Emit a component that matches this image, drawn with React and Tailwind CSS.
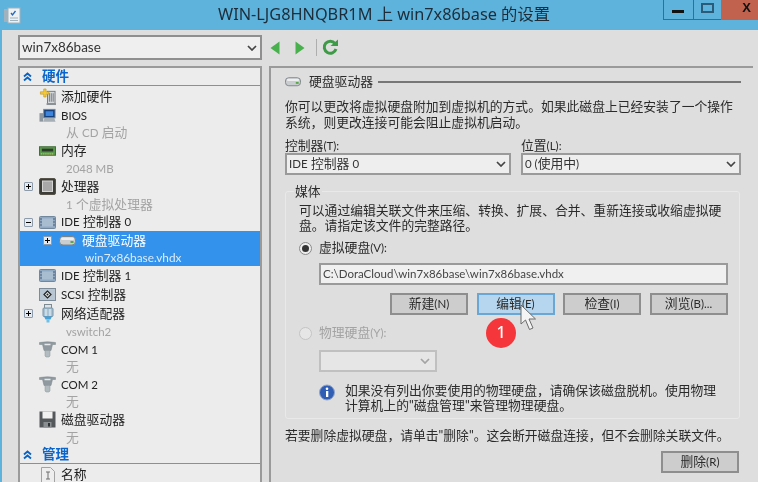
import React from "react";

function L({ children }) {
  return <span className="text-[11.500px]">{children}</span>;
}

function Chevrons() {
  return (
    <svg width="9" height="10" viewBox="0 0 9 10" className="shrink-0">
      <path d="M1 4.500 L4.500 1.500 L8 4.500 M1 8.500 L4.500 5.500 L8 8.500" fill="none" stroke="#0a62c4" strokeWidth="1.800" />
    </svg>
  );
}

function Expander({ minus }) {
  return (
    <div className="w-[9px] h-[9px] shrink-0 border border-[#8d9bab] bg-[#e6ebf1] rounded-[1px] flex items-center justify-center relative">
      <div className="w-[5px] h-px bg-black" />
      {!minus && <div className="absolute w-px h-[5px] bg-black" />}
    </div>
  );
}

function DiskIcon({ w = 17 }) {
  return (
    <svg width={w} height="11" viewBox="0 0 17 11" className="shrink-0">
      <rect x="0.500" y="1.500" width="16" height="8.500" rx="3.500" fill="#c9cdd0" stroke="#7d8488" />
      <rect x="2" y="2.500" width="13" height="2.500" rx="1.200" fill="#eceeef" />
      <rect x="11.500" y="6" width="3" height="2" fill="#5aa64a" />
    </svg>
  );
}

function AddIcon() {
  return (
    <svg width="18" height="18" viewBox="0 0 18 18">
      <rect x="9" y="3" width="8" height="13" fill="#d5d8da" stroke="#73787c" />
      <path d="M11 5v9M13 5v9M15 5v9" stroke="#73787c" />
      <rect x="8" y="15.500" width="10" height="2" fill="#8c9196" />
      <path d="M5 0.500h2.500v3h3v2.500h-3v3H5v-3H1.500V3.500H5z" fill="#f4c93b" stroke="#b98f18" strokeWidth="0.600" />
    </svg>
  );
}
function BiosIcon() {
  return (
    <svg width="18" height="15" viewBox="0 0 18 15">
      <rect x="0.500" y="5" width="4" height="9" fill="#8d979f" />
      <rect x="5" y="1" width="12" height="9" fill="#15407e" stroke="#7c8790" />
      <rect x="7" y="3" width="8" height="5" fill="#3e86dd" />
      <path d="M6 10h10l1.500 4h-13z" fill="#a6afb6" />
    </svg>
  );
}
function RamIcon() {
  return (
    <svg width="18" height="10" viewBox="0 0 18 10">
      <rect x="0.500" y="0.500" width="17" height="9" fill="#5b9a4c" stroke="#3c6b35" />
      <rect x="3" y="2.500" width="12" height="3" fill="#2c3a2a" />
      <path d="M2 8h14" stroke="#d9c566" strokeWidth="1.500" strokeDasharray="1 1" />
    </svg>
  );
}
function CpuIcon() {
  return (
    <svg width="17" height="17" viewBox="0 0 17 17">
      <rect x="0.500" y="0.500" width="16" height="16" rx="1.500" fill="#3d3d38" stroke="#55534a" />
      <rect x="3.500" y="3" width="10" height="10.500" fill="#a8a8a8" stroke="#d5d5d5" />
    </svg>
  );
}
function IdeIcon() {
  return (
    <svg width="17" height="13" viewBox="0 0 17 13">
      <rect x="0.500" y="0.500" width="16" height="12" rx="1" fill="#8ea9c4" stroke="#70879d" />
      <rect x="3" y="2.500" width="11" height="8" fill="#a9bdd1" />
      <path d="M1 3h2M1 6h2M1 9h2M14 3h2M14 6h2M14 9h2" stroke="#4d6379" />
    </svg>
  );
}
function ScsiIcon() {
  return (
    <svg width="17" height="13" viewBox="0 0 17 13">
      <rect x="0.500" y="0.500" width="16" height="12" fill="#b8c5d2" stroke="#7d8b99" />
      <path d="M8.500 3 L5 6.500 L8.500 10 L12 6.500z" fill="#e7ecef" stroke="#222" strokeWidth="1.200" />
      <circle cx="8.500" cy="6.500" r="1" fill="#222" />
    </svg>
  );
}
function NetIcon() {
  return (
    <svg width="12" height="19" viewBox="0 0 12 19">
      <rect x="2.500" y="0.500" width="7" height="4" fill="#dde3e7" stroke="#7c8a94" />
      <rect x="1" y="4" width="10" height="8.500" rx="1" fill="#a9c2d4" stroke="#7693a8" />
      <path d="M4 5v7M8 5v7" stroke="#eef4f8" />
      <path d="M2 12.500h8l-1.500 3h-5z" fill="#41a3d9" />
      <rect x="4.500" y="15.500" width="3" height="3" fill="#6fc0e8" />
    </svg>
  );
}
function ComIcon() {
  return (
    <svg width="17" height="17" viewBox="0 0 17 17">
      <path d="M0.500 1.500Q8.500 0 16.500 1.500V3.500H13.500L12 9.500H5L3.500 3.500H0.500z" fill="#8f999f" stroke="#7a848a" strokeWidth="0.500" />
      <path d="M5.500 3.500h6" stroke="#e5e9eb" strokeWidth="1.500" />
      <path d="M6 9.500h5v5.500l-1 1H7l-1-1z" fill="#b2bbc0" stroke="#8b959b" strokeWidth="0.500" />
    </svg>
  );
}
function FloppyIcon() {
  return (
    <svg width="17" height="17" viewBox="0 0 17 17">
      <path d="M0.500 0.500h16v16h-16z" fill="#55585b" />
      <rect x="3.500" y="0.500" width="10" height="7" fill="#f1f1f1" />
      <rect x="4.500" y="11" width="8" height="5.500" fill="#8b8e90" />
      <rect x="9" y="12" width="2" height="3.500" fill="#303335" />
    </svg>
  );
}
function NameIcon() {
  return (
    <svg width="14" height="17" viewBox="0 0 14 17">
      <path d="M0.500 0.500h9l4 4v12h-13z" fill="#eeeeee" stroke="#a3a3a3" />
      <path d="M5 5h4M5 12h4M7 5v7" stroke="#6f6f6f" />
    </svg>
  );
}

function Section({ children, h = "h-[18px]" }) {
  return (
    <div className={`${h} flex items-center gap-[10px] pl-[3px] border-b border-[#5c9bd8] shrink-0`}>
      <Chevrons />
      <span className="text-[13.500px] font-bold text-[#0a66cc] leading-none">{children}</span>
    </div>
  );
}

function Item({ icon, label, exp, minus, h = "h-[19px]" }) {
  return (
    <div className={`${h} flex items-center shrink-0`}>
      <div className="w-[19px] pl-[4px] shrink-0 flex items-center">{exp && <Expander minus={minus} />}</div>
      <div className="w-[22px] shrink-0 flex justify-center pr-[5px]">{icon}</div>
      <span className="text-[#222] whitespace-nowrap">{label}</span>
    </div>
  );
}

function Sub({ children, h = "h-[17px]" }) {
  return (
    <div className={`${h} flex items-center pl-[46px] text-[#a3a3a3] whitespace-nowrap shrink-0`}>
      <span>{children}</span>
    </div>
  );
}

function Btn({ children, hot, w = "w-[78px]" }) {
  return (
    <div
      className={`${w} h-[22px] shrink-0 flex items-center justify-center border-2 ${
        hot ? "border-[#6aa7d4] bg-[#b5d6ee]" : "border-[#8e8e8e] bg-[#cdcdcd]"
      } text-[#2b2b2b]`}
    >
      <span>{children}</span>
    </div>
  );
}

function Caret({ color = "#444" }) {
  return (
    <svg width="10" height="6" viewBox="0 0 10 6" className="shrink-0">
      <path d="M1 1 L5 5 L9 1" fill="none" stroke={color} strokeWidth="1.700" />
    </svg>
  );
}

function Select({ children, className }) {
  return (
    <div className={`h-[22px] border-2 border-[#9a9a9a] bg-[#eeeeee] flex items-center justify-between pl-[2px] pr-[3px] ${className}`}>
      <span className="text-[#333] whitespace-nowrap">{children}</span>
      <Caret />
    </div>
  );
}

export default function App() {
  return (
    <div className="w-[758px] h-[482px] overflow-hidden bg-[#5eb3dc] flex flex-col text-[12.800px] leading-[15.500px] blur-[0.5px] font-['Lato','Noto_Sans_CJK_SC',sans-serif]">
      {/* title bar */}
      <div className="h-[30px] shrink-0 flex items-center relative">
        <svg width="18" height="18" viewBox="0 0 18 18" className="ml-[3px] shrink-0">
          <rect x="1" y="3" width="5" height="13" fill="#9fb2bd" />
          <rect x="5" y="2" width="12" height="15" fill="#eef1f3" stroke="#9fb2bd" />
          <path d="M8 7l1.500 2 3-4" fill="none" stroke="#2a66b8" strokeWidth="1.300" />
          <path d="M7 12h8M7 14.500h8" stroke="#9fb2bd" />
        </svg>
        <div className="flex-1 text-center text-[16.300px] text-[#1c2c38] pr-[11px] whitespace-nowrap font-['Noto_Sans','Noto_Sans_CJK_SC',sans-serif]">
          WIN-LJG8HNQBR1M 上 win7x86base 的设置
        </div>
        <div className="absolute top-0 right-0 flex h-[20px]">
          <div className="w-[30px] border-l border-b border-[#32708f] flex justify-center">
            <div className="w-[12px] h-[3px] bg-[#111] mt-[10px] ml-[-1px]" />
          </div>
          <div className="w-[28px] border-l border-b border-[#32708f] flex justify-center">
            <div className="w-[13px] h-[10px] border-2 border-[#2b5b78] mt-[3px]" />
          </div>
          <div className="w-[37px] bg-[#c1624f] flex justify-end pr-[7px] text-[#111] font-bold text-[13px] leading-[16px] font-['Liberation_Sans',sans-serif]">
            X
          </div>
        </div>
      </div>

      {/* body */}
      <div className="flex-1 ml-[2px] bg-[#dedede] flex min-h-0">
        <div className="w-[244px] ml-[16px] flex flex-col shrink-0 pt-[5px]">
          <div className="h-[25px] w-full border-2 border-[#8f8f8f] bg-[#efefef] flex items-center justify-between pl-[2px] pr-[3px] shrink-0 text-[13.500px] text-[#333]">
            <span>win7x86base</span>
            <Caret />
          </div>
          <div className="mt-[6px] flex-1 border-t-2 border-x-2 border-[#9a9a9a] bg-[#ececec] flex flex-col overflow-hidden min-h-0">
            <Section>硬件</Section>
            <Item icon={<AddIcon />} label="添加硬件" h="h-[21px]" />
            <Item icon={<BiosIcon />} label={<L>BIOS</L>} h="h-[17px]" />
            <Sub h="h-[17px]">从 <L>CD</L> 启动</Sub>
            <Item icon={<RamIcon />} label="内存" h="h-[19px]" />
            <Sub><L>2048 MB</L></Sub>
            <Item exp icon={<CpuIcon />} label="处理器" />
            <Sub><L>1</L> 个虚拟处理器</Sub>
            <Item exp minus icon={<IdeIcon />} label={<><L>IDE</L> 控制器 <L>0</L></>} h="h-[18px]" />
            <div className="h-[35px] shrink-0 bg-[#3392ec] text-white flex flex-col">
              <div className="h-[19px] flex items-center pl-[23px] gap-[7px]">
                <Expander />
                <DiskIcon />
                <span className="whitespace-nowrap ml-[-1px]">硬盘驱动器</span>
              </div>
              <div className="pl-[65px] h-[16px] flex items-center text-[#dcecfb] text-[11.800px]">win7x86base.vhdx</div>
            </div>
            <Item icon={<IdeIcon />} label={<><L>IDE</L> 控制器 <L>1</L></>} h="h-[19px]" />
            <Item icon={<ScsiIcon />} label={<><L>SCSI</L> 控制器</>} h="h-[19px]" />
            <Item exp icon={<NetIcon />} label="网络适配器" h="h-[19px]" />
            <Sub><L>vswitch2</L></Sub>
            <Item icon={<ComIcon />} label={<L>COM 1</L>} />
            <Sub h="h-[16px]">无</Sub>
            <Item icon={<ComIcon />} label={<L>COM 2</L>} />
            <Sub h="h-[16px]">无</Sub>
            <Item icon={<FloppyIcon />} label="磁盘驱动器" />
            <Sub h="h-[17px]">无</Sub>
            <Section h="h-[18px]">管理</Section>
            <Item icon={<NameIcon />} label="名称" h="h-[22px]" />
          </div>
        </div>

        <div className="w-[492px] ml-[7px] flex flex-col shrink-0 pt-[5px]">
          {/* toolbar */}
          <div className="h-[25px] flex items-center shrink-0">
            <svg width="10" height="14" viewBox="0 0 10 14" className="ml-[1px]"><path d="M9.500 0.500v13L0.500 7z" fill="#48b04c" /></svg>
            <svg width="10" height="14" viewBox="0 0 10 14" className="ml-[15px]"><path d="M0.500 0.500v13L9.500 7z" fill="#48b04c" /></svg>
            <div className="w-px h-[17px] bg-[#aeaeae] ml-[11px]" />
            <svg width="18" height="17" viewBox="0 0 18 17" className="ml-[4px]">
              <path d="M14 4.500A6 6 0 1 0 15 10" fill="none" stroke="#3f9a48" strokeWidth="3" />
              <path d="M9.500 7h7.500V0.500z" fill="#3f9a48" />
            </svg>
          </div>
          {/* panel */}
          <div className="mt-[6px] flex-1 w-[484px] border-t-2 border-l-2 border-[#9a9a9a] flex flex-col pl-[14px] pr-[12px] min-h-0 text-[#2b2b2b]">
            <div className="h-[27px] flex items-center shrink-0">
              <DiskIcon w={16} />
              <span className="ml-[8px] whitespace-nowrap">硬盘驱动器</span>
              <div className="flex-1 h-[2px] bg-[#777] ml-[5px]" />
            </div>
            <div className="mt-[3px] whitespace-nowrap leading-[16px]">
              <div>你可以更改将虚拟硬盘附加到虚拟机的方式。如果此磁盘上已经安装了一个操作</div>
              <div>系统，则更改连接可能会阻止虚拟机启动。</div>
            </div>
            <div className="flex gap-[10px] mt-[8px] shrink-0">
              <div className="w-[226px] shrink-0">
                <div className="h-[15px] flex items-center"><span>控制器<L>(T):</L></span></div>
                <Select className="w-full"><L>IDE</L> 控制器 <L>0</L></Select>
              </div>
              <div className="flex-1">
                <div className="h-[15px] flex items-center"><span>位置<L>(L):</L></span></div>
                <Select className="w-full"><L>0 (</L>使用中<L>)</L></Select>
              </div>
            </div>
            {/* group */}
            <div className="relative mt-[16px] h-[228px] w-[455px] shrink-0 border border-[#e9e9e9] rounded-[3px] pl-[13px] pr-[10px]">
              <div className="absolute left-[8px] top-[-9px] bg-[#dedede] px-px leading-[16px] whitespace-nowrap">媒体</div>
              <div className="mt-[11px] leading-[15px] whitespace-nowrap">
                <div>可以通过编辑关联文件来压缩、转换、扩展、合并、重新连接或收缩虚拟硬</div>
                <div>盘。请指定该文件的完整路径。</div>
              </div>
              <div className="flex items-center mt-[6px] h-[18px]">
                <div className="w-[13px] h-[13px] rounded-full border border-[#8a8a8a] bg-[#ededed] flex items-center justify-center shrink-0">
                  <div className="w-[7px] h-[7px] rounded-full bg-[#333]" />
                </div>
                <span className="ml-[7px]">虚拟硬盘<L>(V):</L></span>
              </div>
              <div className="ml-[20px] mt-[6px] w-[409px] h-[22px] border-2 border-[#9a9a9a] bg-[#f0f0f0] flex items-center pl-[2px] text-[#444] whitespace-nowrap text-[11.500px]">
                C:\DoraCloud\win7x86base\win7x86base.vhdx
              </div>
              <div className="ml-[91px] mt-[8px] flex gap-[8.500px] relative">
                <Btn>新建<L>(N)</L></Btn>
                <Btn hot>编辑<L>(E)</L></Btn>
                <Btn>检查<L>(I)</L></Btn>
                <Btn>浏览<L>(B)...</L></Btn>
                <div className="absolute left-[96px] top-[25px] w-[30px] h-[30px] rounded-full bg-[#f5363a] flex items-center justify-center text-white text-[16px] font-medium font-['Noto_Sans',sans-serif]">
                  1
                </div>
                <svg width="18" height="27" viewBox="0 0 18 27" className="absolute left-[130px] top-[11px]">
                  <path d="M1 1 V20 L5.500 16 L9.500 25.500 L13 24 L9 15 L15.500 15 z" fill="#f4f4f4" stroke="#6b6b6b" strokeWidth="1" />
                </svg>
              </div>
              <div className="flex items-center mt-[9px] h-[18px] text-[#a3a3a3]">
                <div className="w-[13px] h-[13px] rounded-full border border-[#c4c4c4] bg-[#e6e6e6] shrink-0" />
                <span className="ml-[7px]">物理硬盘<L>(Y):</L></span>
              </div>
              <div className="ml-[20px] mt-[8px] w-[118px] h-[22px] border-2 border-[#c0c0c0] bg-[#e6e6e6] flex items-center justify-end pr-[5px]">
                <Caret color="#a3a3a3" />
              </div>
              <div className="flex ml-[20px] mt-[11px]">
                <svg width="16" height="17" viewBox="0 0 16 17" className="shrink-0 mt-[1px]">
                  <circle cx="8" cy="8.500" r="7.500" fill="#2f5eb4" stroke="#93a6c8" />
                  <rect x="7" y="7" width="2.300" height="6" fill="#fff" />
                  <circle cx="8" cy="4.700" r="1.300" fill="#fff" />
                </svg>
                <div className="ml-[10px] whitespace-nowrap leading-[15px]">
                  <div>如果没有列出你要使用的物理硬盘，请确保该磁盘脱机。使用物理</div>
                  <div>计算机上的"磁盘管理"来管理物理硬盘。</div>
                </div>
              </div>
            </div>
            <div className="mt-[9px] whitespace-nowrap">若要删除虚拟硬盘，请单击"删除"。这会断开磁盘连接，但不会删除关联文件。</div>
            <div className="flex justify-end mt-[7px] pr-[1px] w-[455px]">
              <Btn>删除<L>(R)</L></Btn>
            </div>
          </div>
        </div>
      </div>
    </div>
  );
}
